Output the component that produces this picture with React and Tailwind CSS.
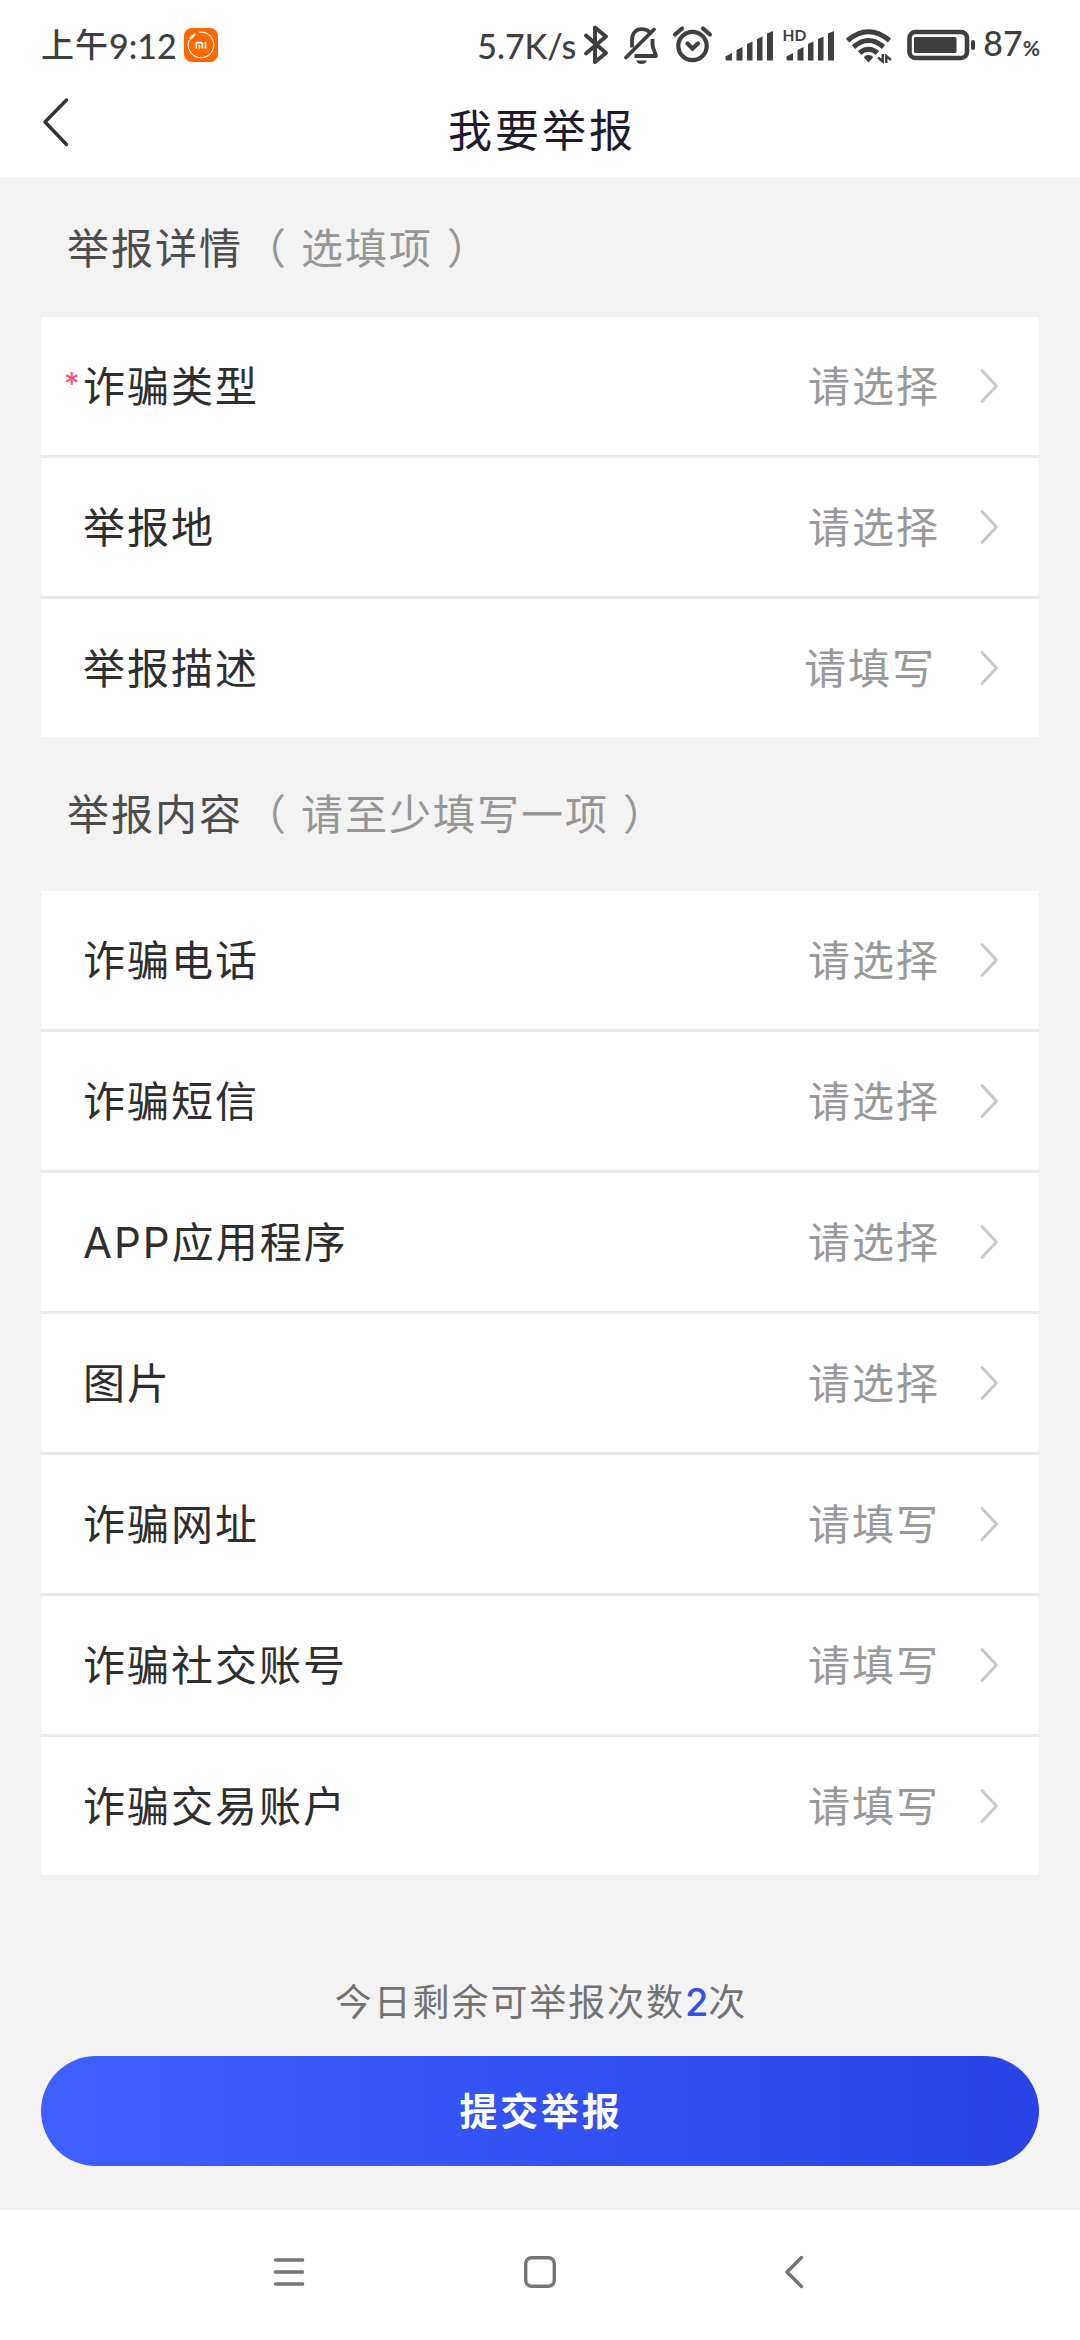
const detailRows = [
  { label: '诈骗类型', value: '请选择', required: true },
  { label: '举报地', value: '请选择' },
  { label: '举报描述', value: '请填写', inset: true },
]

const contentRows = [
  { label: '诈骗电话', value: '请选择' },
  { label: '诈骗短信', value: '请选择' },
  { label: 'APP应用程序', value: '请选择' },
  { label: '图片', value: '请选择' },
  { label: '诈骗网址', value: '请填写' },
  { label: '诈骗社交账号', value: '请填写' },
  { label: '诈骗交易账户', value: '请填写' },
]

export default function App() {
  return (
    <div className="flex h-[2340px] w-[1080px] flex-col overflow-hidden bg-[#f3f3f3] font-['Inter','Noto_Sans_CJK_SC',sans-serif]">
      <header className="h-[177px] bg-white">
        <StatusBar />
        <TitleBar />
      </header>

      <main className="flex flex-1 flex-col px-[41px]">
        <SectionTitle title="举报详情" hint="选填项" className="h-[140px] pt-[2px]" />
        <Card rows={detailRows} />
        <SectionTitle title="举报内容" hint="请至少填写一项" className="h-[154px] pt-[1px]" />
        <Card rows={contentRows} />

        <p className="mt-[100px] pl-[2px] text-center text-[37px] leading-[54px] tracking-[1.9px] text-[#737373]">
          今日剩余可举报次数<span className="text-[38px] font-medium tracking-normal text-[#3350e8]">2</span>次
        </p>
        <button className="mt-[26px] flex h-[110px] w-full items-center justify-center rounded-full bg-linear-to-r from-[#3f5fff] to-[#2844e6] pl-[2px] text-[38px] font-bold tracking-[2.8px] text-white">
          提交举报
        </button>
      </main>

      <NavBar />
    </div>
  )
}

function StatusBar() {
  return (
    <div className="flex h-[90px] items-center pr-[40px] pl-[41px] text-[#3f3f3f]">
      <div className="flex h-[50px] items-center font-['Lato','Noto_Sans_CJK_SC',sans-serif] font-medium">
        <span className="text-[33px] tracking-[1px]">上午</span>
        <span className="text-[34px]">9:12</span>
      </div>
      {/* Mi app notification */}
      <svg className="ml-[7.5px] h-[34px] w-[34px]" viewBox="0 0 34 34" fill="none">
        <rect width="34" height="34" rx="8" fill="#ff6700" />
        <path d="M15 4.3A12.8 12.8 0 1 1 5.2 12" stroke="#fff" strokeWidth="1.1" />
        <path d="M6.5 10.2L10.5 6.6" stroke="#fff" strokeWidth="2.6" strokeLinecap="round" />
        <path d="M12.3 20.5V14.7H16.6Q18.4 14.7 18.4 16.5V20.5M15.4 17V20.5M21.5 14V20.5" stroke="#fff" strokeWidth="1.7" />
      </svg>

      <span className="mr-[2px] ml-auto font-['Lato',sans-serif] text-[34px] font-medium">5.7K/s</span>
      {/* Bluetooth */}
      <svg className="h-[50px] w-[40px]" viewBox="578 20 40 50" fill="none" stroke="currentColor" strokeWidth="4" strokeLinejoin="round" strokeLinecap="round">
        <path d="M586 35.5L606 53L595 62V27.5L606 36.5L586 53.5" />
      </svg>
      {/* Muted bell */}
      <svg className="h-[50px] w-[50px]" viewBox="618 20 50 50" fill="none" stroke="currentColor" strokeWidth="3.8">
        <path d="M632 47.5V40C632 33 636 29.2 641.5 29.2C645 29.2 647.5 30.2 649.5 32" />
        <path d="M652.5 39V44C652.5 49 655.5 52 656 56H634.5" strokeLinejoin="round" />
        <path d="M626 57.5L654 29.5" strokeLinecap="round" />
        <path d="M636 60.5H647Q645.5 64 641.5 64T636 60.5Z" fill="currentColor" stroke="none" />
      </svg>
      {/* Alarm */}
      <svg className="h-[50px] w-[52px]" viewBox="668 20 52 50" fill="none" stroke="currentColor" strokeWidth="4.2">
        <circle cx="692.5" cy="46" r="14.2" />
        <path d="M687.5 43.5L692.5 48.5L698 43.5M675 34.5L682 28.5M710 34.5L703 28.5" strokeLinecap="round" />
      </svg>
      <SignalBars />
      <SignalBars hd />
      {/* Wi-Fi */}
      <svg className="h-[50px] w-[60px]" viewBox="841 20 60 50" fill="none" stroke="currentColor" strokeWidth="5">
        <path d="M847.5 40.5Q868.5 23 889.5 40.5" />
        <path d="M853.5 47Q868.5 34 883.5 47" />
        <path d="M859.5 53Q868.5 45.5 877.5 53" />
        <path d="M868.5 55C871 55 873 56.3 873 57.5L868.5 62.5L864 57.5C864 56.3 866 55 868.5 55Z" fill="currentColor" stroke="none" />
        <path d="M882.7 54V61.5L878 57.5M886.3 63V56L891 60" strokeWidth="2.4" />
      </svg>
      {/* Battery */}
      <svg className="h-[50px] w-[76px]" viewBox="901 20 76 50" fill="none">
        <rect x="909.5" y="32" width="57.5" height="26" rx="6" stroke="currentColor" strokeWidth="4.6" />
        <rect x="914" y="37" width="42.5" height="16" rx="1.5" fill="currentColor" />
        <rect x="971" y="40" width="4" height="10" rx="2" fill="currentColor" />
      </svg>
      <div className="ml-[6px] font-['Lato',sans-serif] text-[34px] leading-[50px] font-medium">
        87<span className="text-[21px] font-bold">%</span>
      </div>
    </div>
  )
}

function SignalBars({ hd }) {
  return (
    <svg className="h-[50px] w-[60.5px] shrink-0" viewBox="720 20 60.5 50" fill="currentColor">
      <path d="M725.5 59V56.5L732 53V60.5H727Q725.5 60.5 725.5 59Z" />
      <path d="M736.5 60.5V50L742.5 47V60.5Z" />
      <path d="M747 60.5V44L752.5 41.5V60.5Z" />
      <path d="M757 60.5V39L762.5 36.5V60.5Z" />
      <path d="M767 60.5V33.5L773 31V60.5Z" />
      {hd && (
        <text x="721.5" y="41" fontSize="15.5" fontWeight="700" fontFamily="Lato, sans-serif">HD</text>
      )}
    </svg>
  )
}

function TitleBar() {
  return (
    <div className="flex h-[87px] items-center">
      <svg className="ml-[40px] h-[54px] w-[32px] -translate-y-[12px]" viewBox="0 0 32 54" fill="none" stroke="#333" strokeWidth="3.4" strokeLinecap="round" strokeLinejoin="round">
        <path d="M26.5 5L5 27L26.5 49.5" />
      </svg>
      <h1 className="mr-[68px] mb-[6px] flex-1 text-center text-[44px] leading-[64px] tracking-[3px] text-[#1f1b2e]">我要举报</h1>
    </div>
  )
}

function SectionTitle({ title, hint, className }) {
  return (
    <h2 className={`flex items-center pl-[26px] text-[42px] tracking-[2px] text-[#4d4d4d] ${className}`}>
      {title}
      <span className="text-[#969696]">
        <span className="mr-[13px] ml-[1px]">（</span>
        {hint}
        <span className="ml-[14px]">）</span>
      </span>
    </h2>
  )
}

function Card({ rows }) {
  return (
    <div className="divide-y-3 divide-[#eaeaea] bg-white">
      {rows.map(row => (
        <Row key={row.label} {...row} />
      ))}
    </div>
  )
}

function Row({ label, value, required, inset }) {
  return (
    <div className="box-content flex h-[138px] items-center pr-[40px] text-[42px] tracking-[2px]">
      <span className="w-[42px] pb-[4px] pl-[23px] text-[31px] leading-[44px] tracking-normal text-[#f0527a]">{required && '*'}</span>
      <span className="text-[#2e2e2e]">{label}</span>
      <span className={inset ? 'mr-[43px] ml-auto text-[#999]' : 'mr-[39px] ml-auto text-[#999]'}>{value}</span>
      <svg className="h-[36px] w-[20px]" viewBox="0 0 20 36" fill="none" stroke="#c8c8c8" strokeWidth="3" strokeLinecap="round" strokeLinejoin="round">
        <path d="M3 2.5L17.5 18L3 33.5" />
      </svg>
    </div>
  )
}

function NavBar() {
  return (
    <nav className="flex h-[130px] items-center bg-white pr-[273px] pb-[6px] pl-[270px] text-[#757575]">
      <svg className="h-[38px] w-[38px]" viewBox="0 0 38 38" stroke="currentColor" strokeWidth="3.6" strokeLinecap="round">
        <path d="M5.5 7H32.5M5.5 19H32.5M5.5 31H32.5" />
      </svg>
      <svg className="ml-[213px] h-[38px] w-[38px]" viewBox="0 0 38 38" fill="none" stroke="currentColor" strokeWidth="3.4">
        <rect x="4.7" y="4.7" width="28.6" height="28.6" rx="6" />
      </svg>
      <svg className="ml-auto h-[38px] w-[26px]" viewBox="0 0 26 38" fill="none" stroke="currentColor" strokeWidth="3.4" strokeLinecap="round" strokeLinejoin="round">
        <path d="M20.5 4.5L6 19L20.5 33.5" />
      </svg>
    </nav>
  )
}
